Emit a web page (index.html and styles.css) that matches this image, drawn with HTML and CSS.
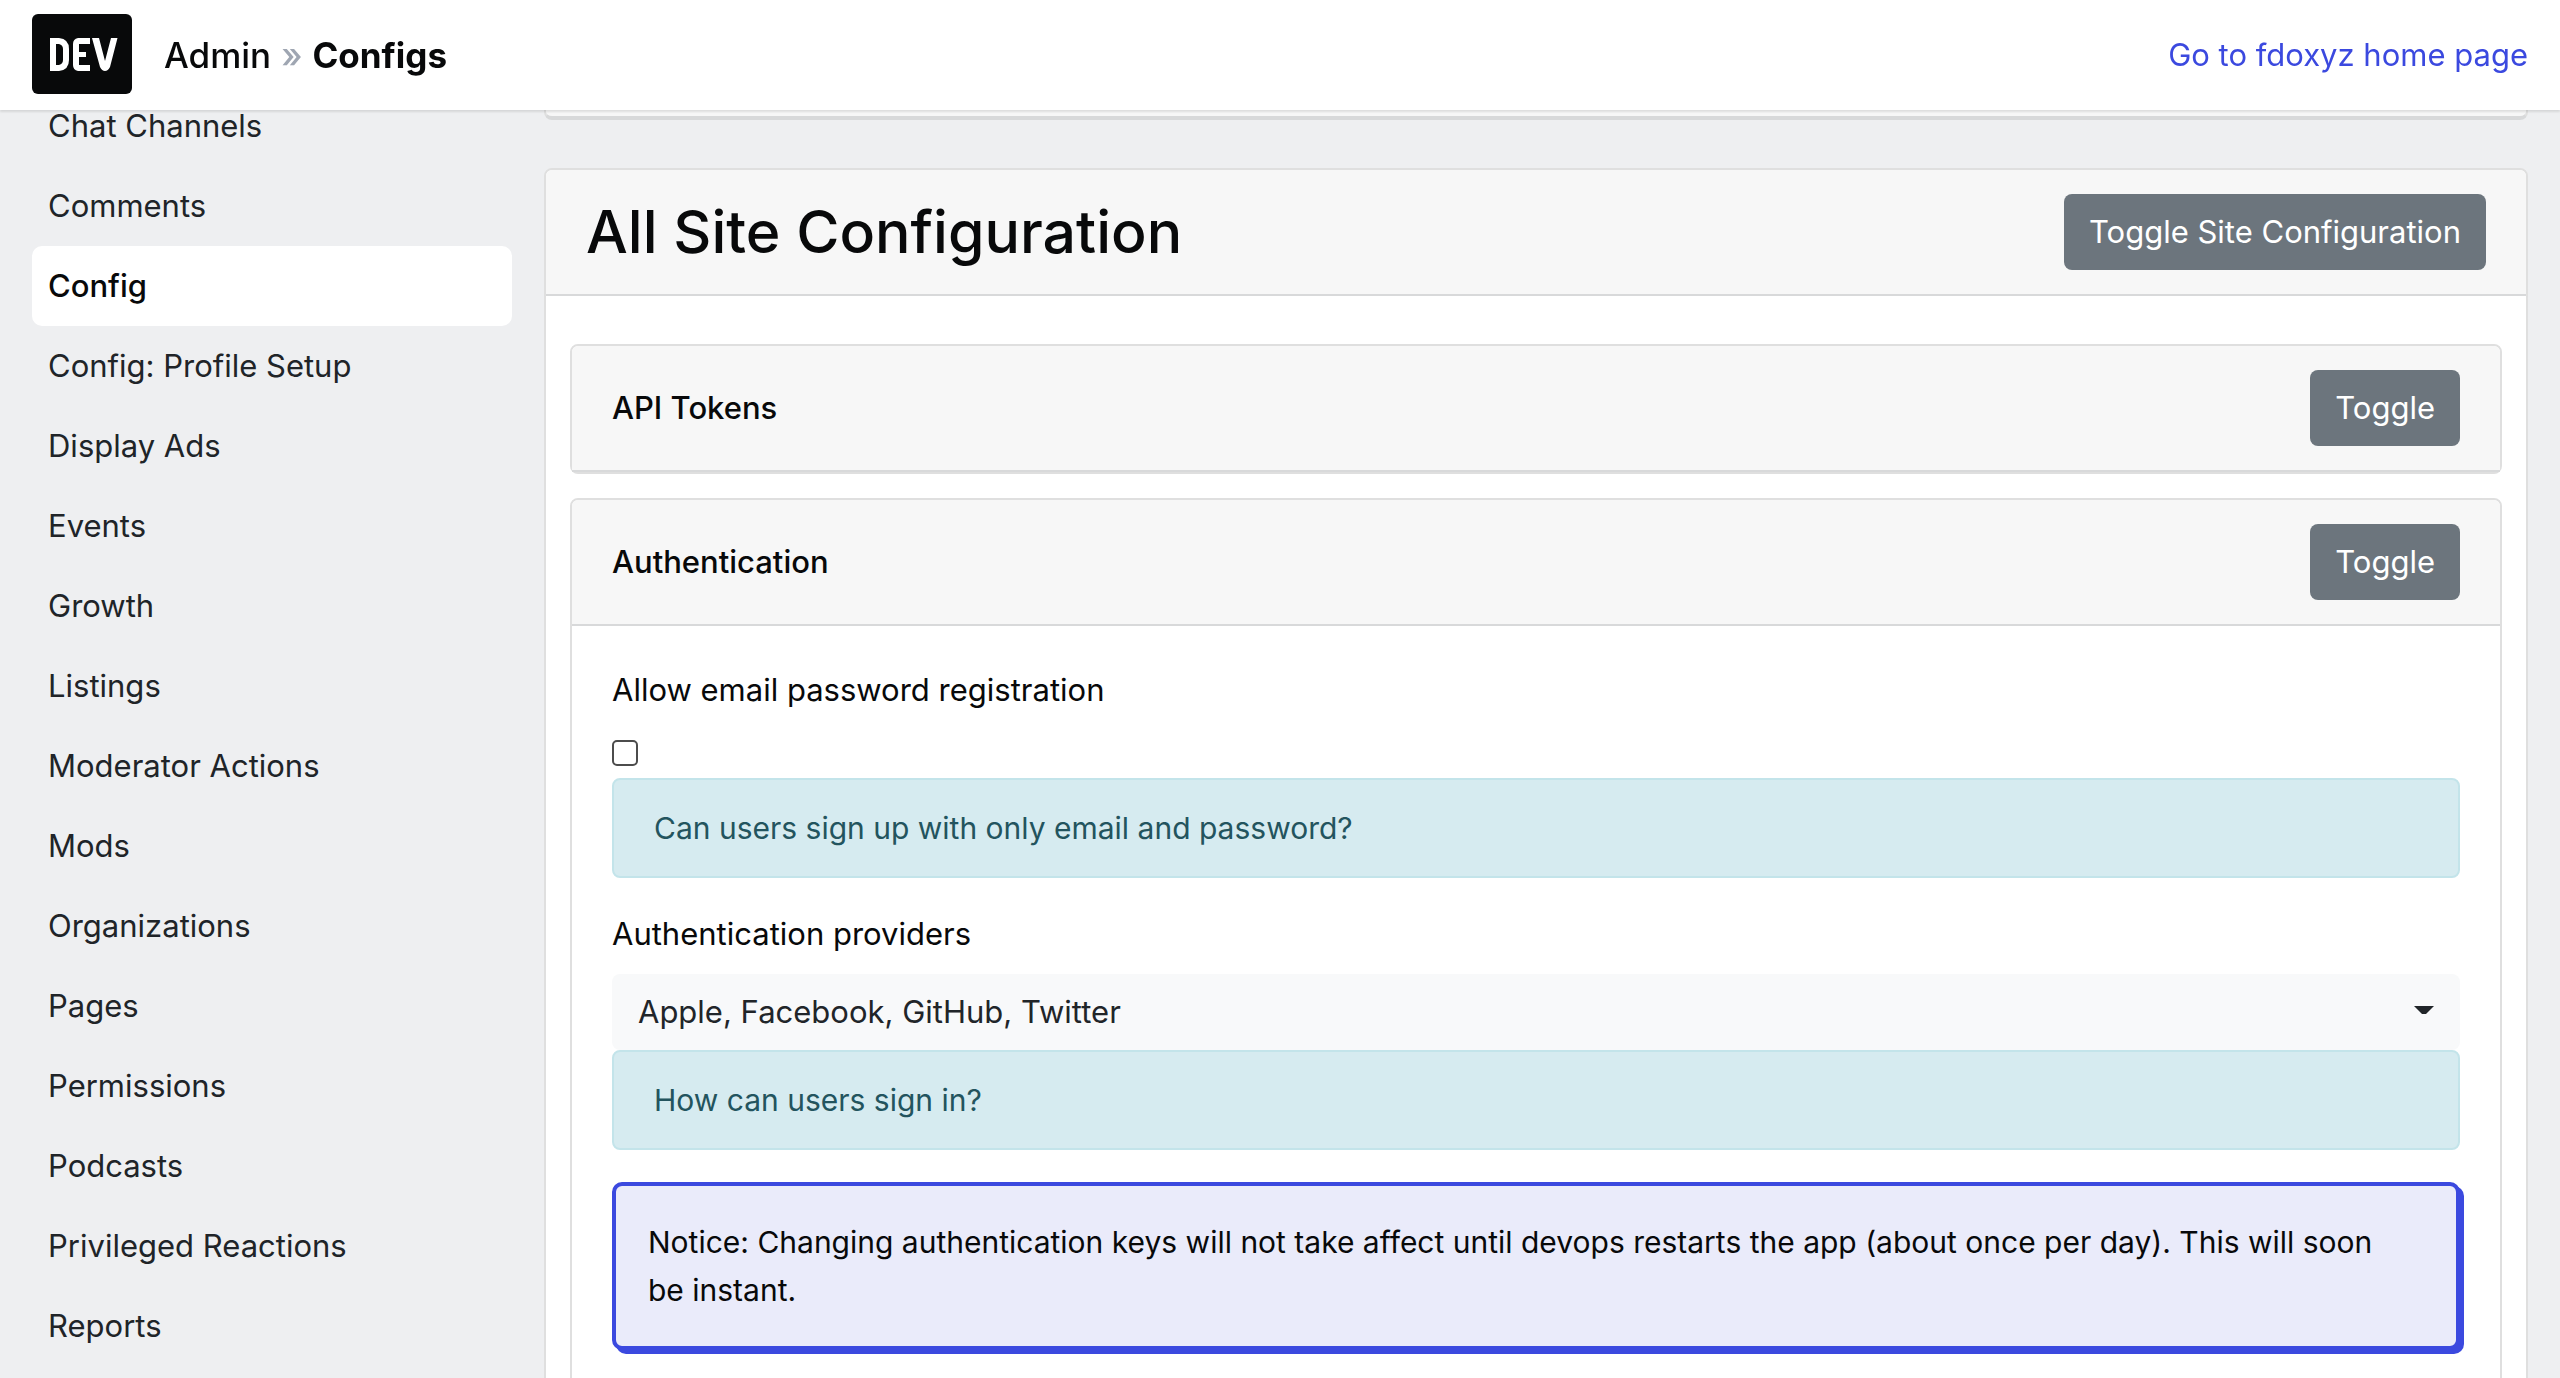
FILE: index.html
```html
<!DOCTYPE html>
<html lang="en">
<head>
<meta charset="utf-8">
<title>Admin » Configs</title>
<link rel="stylesheet" href="styles.css">
</head>
<body>
<header class="topbar">
  <a class="logo" href="#" aria-label="DEV home">
    <svg width="100" height="80" viewBox="0 0 100 80" aria-hidden="true">
      <rect width="100" height="80" rx="6" fill="#08090a"/>
      <path fill="#fff" fill-rule="evenodd" d="M18 24H27Q37 25 37 35V46Q37 56 27 57H18ZM24 30V51H27Q31 50 31 46V35Q31 31 27 30Z"/>
      <path fill="#fff" d="M58 24V30H47V38H54V43H47V51H58V57H46Q41 56 41 51V30Q41 25 46 24Z"/>
      <path fill="#fff" d="M60 24H67L73 47L79 24H85.500L78 53Q76 57 73 57T68 53Z"/>
    </svg>
  </a>
  <nav class="crumbs"><a href="#">Admin</a><span class="crumb-sep">»</span><a class="crumb-current" href="#">Configs</a></nav>
  <a class="home-link" href="#">Go to fdoxyz home page</a>
</header>
<div class="layout">
  <nav class="sidebar">
    <a href="#">Chat Channels</a>
    <a href="#">Comments</a>
    <a class="active" href="#">Config</a>
    <a href="#">Config: Profile Setup</a>
    <a href="#">Display Ads</a>
    <a href="#">Events</a>
    <a href="#">Growth</a>
    <a href="#">Listings</a>
    <a href="#">Moderator Actions</a>
    <a href="#">Mods</a>
    <a href="#">Organizations</a>
    <a href="#">Pages</a>
    <a href="#">Permissions</a>
    <a href="#">Podcasts</a>
    <a href="#">Privileged Reactions</a>
    <a href="#">Reports</a>
  </nav>
  <main class="content">
    <section class="card card-collapsed"></section>
    <section class="card">
      <div class="card-header">
        <h1>All Site Configuration</h1>
        <button class="btn" type="button">Toggle Site Configuration</button>
      </div>
      <div class="card-list">
        <section class="card">
          <div class="card-header">
            <h2>API Tokens</h2>
            <button class="btn" type="button">Toggle</button>
          </div>
        </section>
        <section class="card">
          <div class="card-header">
            <h2>Authentication</h2>
            <button class="btn" type="button">Toggle</button>
          </div>
          <form class="card-body">
            <div class="field">
              <label for="allow-email">Allow email password registration</label>
              <div class="check-row"><input id="allow-email" class="checkbox" type="checkbox"></div>
              <div class="hint">Can users sign up with only email and password?</div>
            </div>
            <div class="field">
              <label for="providers">Authentication providers</label>
              <div class="select-wrap">
                <select id="providers" class="select">
                  <option>Apple, Facebook, GitHub, Twitter</option>
                </select>
                <svg class="caret" width="20" height="8" viewBox="0 0 20 8" aria-hidden="true"><path fill="#212529" d="M0 0H20L12 8H8Z"/></svg>
              </div>
              <div class="hint">How can users sign in?</div>
            </div>
            <div class="notice">Notice: Changing authentication keys will not take affect until devops restarts the app (about once per day). This will soon be instant.</div>
          </form>
        </section>
      </div>
    </section>
  </main>
</div>
</body>
</html>
```
FILE: styles.css
```css
* {
  box-sizing: border-box;
}

body {
  margin: 0;
  background: #eeeff1;
  color: #08090a;
  font-family: Inter, "Liberation Sans", sans-serif;
  font-size: 31px;
  line-height: 48px;
}

a {
  color: inherit;
  text-decoration: none;
}

h1,
h2 {
  margin: 0;
  font-weight: 500;
}

h1 {
  font-size: 59px;
  line-height: 76px;
}

h2 {
  font-size: 31px;
}

.topbar {
  position: fixed;
  top: 0;
  left: 0;
  right: 0;
  z-index: 10;
  display: flex;
  align-items: center;
  height: 110px;
  padding: 0 32px;
  background: #fff;
  box-shadow: 0 2px 2px rgba(0, 0, 0, 0.1);
}

.logo {
  display: flex;
  margin-right: 32px;
  margin-bottom: 2px;
}

.crumbs {
  display: flex;
  gap: 10px;
  font-size: 35px;
  font-weight: 500;
}

.crumb-sep {
  color: #9fa6b2;
}

.crumb-current {
  font-weight: 700;
}

.home-link {
  margin-left: auto;
  color: #3b49df;
}

.layout {
  display: flex;
  gap: 32px;
  height: 100vh;
  padding: 86px 32px 0;
  overflow: hidden;
}

.sidebar {
  display: flex;
  flex: 0 0 480px;
  flex-direction: column;
  color: #202428;
}

.sidebar a {
  padding: 16px;
  border-radius: 10px;
}

.sidebar .active {
  background: #fff;
  color: #08090a;
  font-weight: 500;
}

.content {
  flex: 1;
  min-width: 0;
}

.card {
  border: 2px solid #dfdfdf;
  border-radius: 8px;
  background: #fff;
}

.card-collapsed {
  height: 34px;
  margin-bottom: 48px;
  border-bottom: 4px solid #d8d9da;
  background: #f7f7f7;
}

.card-header {
  display: flex;
  align-items: center;
  justify-content: space-between;
  padding: 24px 40px;
  border-bottom: 2px solid #d8d9da;
  border-radius: 6px 6px 0 0;
  background: #f7f7f7;
}

.card-list {
  display: flex;
  flex-direction: column;
  gap: 24px;
  padding: 48px 24px;
}

.card-body {
  padding: 40px;
}

.btn {
  height: 76px;
  padding: 0 25px;
  border: 0;
  border-radius: 8px;
  background: #6c757d;
  color: #fff;
  font: inherit;
}

.field {
  margin-bottom: 32px;
}

.field label {
  display: block;
  margin-bottom: 16px;
}

.check-row {
  display: flex;
  align-items: center;
  height: 46px;
  margin-bottom: 2px;
}

.checkbox {
  width: 26px;
  height: 26px;
  margin: 0;
  appearance: none;
  border: 2px solid #4c4c4c;
  border-radius: 5px;
  background: #fff;
}

.hint,
.notice {
  font-size: 30px;
}

.hint {
  padding: 24px 40px;
  border: 2px solid #c3e4ea;
  border-radius: 8px;
  background: #d6ebf0;
  color: #23545e;
}

.select-wrap {
  position: relative;
}

.select {
  display: block;
  width: 100%;
  height: 76px;
  padding: 0 26px;
  appearance: none;
  border: 0;
  border-radius: 8px;
  background: #f8f9fa;
  color: #212529;
  font: inherit;
}

.caret {
  position: absolute;
  top: 32px;
  right: 26px;
}

.notice {
  padding: 32px 48px 32px 32px;
  border: 4px solid #3b49df;
  border-radius: 10px;
  background: #eaebfa;
  box-shadow: 4px 4px 0 #3b49df;
}
```
